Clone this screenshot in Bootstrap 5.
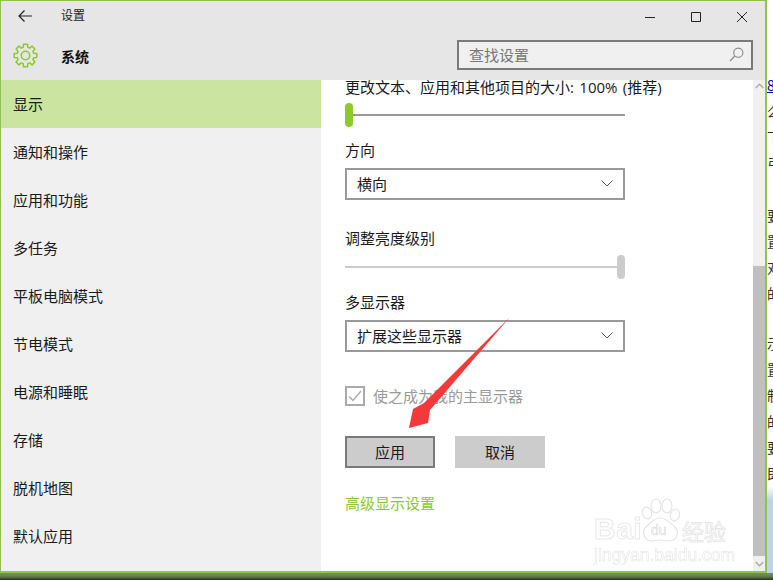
<!DOCTYPE html>
<html lang="zh">
<head>
<meta charset="utf-8">
<title>设置</title>
<link href="https://cdn.jsdelivr.net/npm/bootstrap@5.3.0/dist/css/bootstrap.min.css" rel="stylesheet">
<style>
html,body{width:773px;height:580px;overflow:hidden;margin:0;background:#fff;}
body{font-family:"Open Sans","Noto Sans CJK SC",sans-serif;font-size:15px;color:#1a1a1a;line-height:20px;position:relative;}
.stage{height:573px;}
.win{width:767px;height:573px;border:solid #8fc351;border-width:1px 2px 2px 1px;background:#fff;flex:none;}
.webstrip{width:6px;overflow:hidden;font-size:14px;line-height:26px;background:linear-gradient(#fff 0,#fff 486px,#eef3f8 490px,#bcd3ea 500px,#bcd3ea 100%);padding-top:72px;height:573px;font-family:"Noto Sans CJK SC",sans-serif;white-space:nowrap;color:#333;}
.webstrip div{height:26px;}
.webstrip .lnk{color:#00c;text-decoration:underline;}
.webstrip .gap{height:24px;}
.webstrip .gap-a{height:26px;}
.desk{height:7px;background:linear-gradient(#71905a 0,#66824f 45%,#3c4a30 85%,#1e2418 100%);}
.head{background:#e6e6e6;height:79px;flex:none;}
.toprow{height:29px;}
.backbtn{width:48px;padding-left:17px;}
.apptitle{font-size:12px;margin-left:12px;color:#222;}
.winbtn{width:46px;height:29px;}
.winbtn svg{position:relative;top:1px;}
.secrow{height:50px;padding-left:12px;padding-right:12px;}
.sectitle{font-size:14px;font-weight:700;margin-left:23px;color:#111;margin-top:3px;}
.searchbox{width:296px;height:30px;border:2px solid #7a7a7a;background:#f0f0f0;color:#777;padding:0 10px;margin-top:-1px;}
.main{height:491px;}
.sidenav{width:320px;flex:none;background:#f0f0f0;border-radius:0;}
.sidenav .list-group-item{height:48px;border:0;background:transparent;padding:0 12px;display:flex;align-items:center;color:#1a1a1a;font-size:15px;border-radius:0;}
.sidenav .list-group-item.active{background:#cbe5a0;color:#1a1a1a;margin:0;}
.pane{width:432px;flex:none;padding-left:24px;overflow:hidden;}
.lbl{height:20px;white-space:nowrap;}
.lbl-first{margin-top:-3px;word-spacing:1.5px;}
.sliderwrap{width:280px;height:24px;margin-top:6px;}
.sliderwrap-b{margin-top:7px;}
.track{height:2px;background:#999;}
.track-off{background:#ccc;}
.knob{width:8px;height:24px;border-radius:4px;background:#8dc92c;position:absolute;top:0;}
.knob-l{left:0;}
.knob-r{right:0;background:#ccc;}
.gap13{margin-top:13px;}
.gap28{margin-top:28px;}
.dropbox{width:280px;height:32px;border:2px solid #999;border-radius:0;padding:0 10px 1px;margin-top:8px;background:#fff;color:#1a1a1a;font-size:15px;}
.checkrow{margin-top:34px;height:20px;color:#999;}
.checkmark{width:20px;height:20px;border:2px solid #aaa;margin-right:8px;flex:none;}
.btnrow{margin-top:30px;gap:20px;}
.actbtn{width:90px;height:32px;background:#ccc;border:2px solid #ccc;border-radius:0;color:#1a1a1a;font-size:15px;padding:0;line-height:26px;}
.actbtn-def{border-color:#7a7a7a;}
.advlink{display:block;margin-top:25px;color:#8dc92c;text-decoration:none;}
.sbar{width:12px;flex:none;background:#f0f0f0;}
.sbar-top,.sbar-bot{height:12px;flex:none;}
.sbar-space{height:174px;flex:none;}
.sbar-thumb{flex:1;background:#c0c0c0;}
.sbar-bot{height:15px;}
.arrow{position:absolute;left:400px;top:310px;width:120px;height:125px;}
.wm{position:absolute;left:590px;top:498px;width:145px;height:68px;color:#fff;filter:blur(.4px);}
.wm-big{position:absolute;font-family:"Liberation Sans",sans-serif;font-size:30px;font-weight:700;line-height:26px;-webkit-text-stroke:1px #e8e8e8;}
.wm-bai{left:4px;top:18px;letter-spacing:.5px;}
.wm-cn{left:92px;top:21px;font-family:"Noto Sans CJK SC",sans-serif;font-size:22px;font-weight:400;line-height:22px;}
.wm-url{position:absolute;left:4px;top:48px;font-family:"Liberation Sans",sans-serif;font-size:17.5px;line-height:18px;white-space:nowrap;-webkit-text-stroke:.6px #e6e6e6;}
.wm-paw{position:absolute;left:44px;top:0;}
</style>
</head>
<body>
<div class="stage d-flex">
  <div class="win d-flex flex-column">
    <div class="head d-flex flex-column">
      <div class="toprow d-flex align-items-center">
        <div class="backbtn d-flex align-items-center">
          <svg width="14" height="12" viewBox="0 0 14 12" fill="none" stroke="#222" stroke-width="1.2"><path d="M14 6H1M6.5 .5 1 6l5.5 5.5"/></svg>
        </div>
        <span class="apptitle">设置</span>
        <div class="d-flex ms-auto">
          <div class="winbtn d-flex align-items-center justify-content-center"><svg width="12" height="12" viewBox="0 0 12 12" stroke="#222" stroke-width="1"><path d="M1 6.5h10"/></svg></div>
          <div class="winbtn d-flex align-items-center justify-content-center"><svg width="12" height="12" viewBox="0 0 12 12" fill="none" stroke="#222" stroke-width="1"><path d="M1.5 1.5h9v9h-9z"/></svg></div>
          <div class="winbtn d-flex align-items-center justify-content-center"><svg width="12" height="12" viewBox="0 0 12 12" fill="none" stroke="#222" stroke-width="1"><path d="M1 1l10 10M11 1 1 11"/></svg></div>
        </div>
      </div>
      <div class="secrow d-flex align-items-center">
        <svg width="25" height="25" viewBox="-12.5 -12.5 25 25" fill="none" stroke="#8dc92c" stroke-width="1.5" style="flex:none"><path stroke-linejoin="round" d="M-2.34-8.17-2-11.3H2L2.34-8.17 4.12-7.43 6.58-9.4 9.4-6.58 7.43-4.12 8.17-2.34 11.3-2V2L8.17 2.34 7.43 4.12 9.4 6.58 6.58 9.4 4.12 7.43 2.34 8.17 2 11.3H-2L-2.34 8.17-4.12 7.43-6.58 9.4-9.4 6.58-7.43 4.12-8.17 2.34-11.3 2V-2L-8.17-2.34-7.43-4.12-9.4-6.58-6.58-9.4-4.12-7.43Z"/><circle r="4.2"/></svg>
        <span class="sectitle">系统</span>
        <div class="searchbox d-flex align-items-center justify-content-between ms-auto">
          <span>查找设置</span>
          <svg width="15" height="15" viewBox="0 0 15 15" fill="none" stroke="#888" stroke-width="1.1" style="margin-right:-3px"><circle cx="9.3" cy="5.7" r="4.6"/><path d="M5.8 9 1 14"/></svg>
        </div>
      </div>
    </div>
    <div class="main d-flex">
      <div class="sidenav list-group list-group-flush">
        <a class="list-group-item active">显示</a>
        <a class="list-group-item">通知和操作</a>
        <a class="list-group-item">应用和功能</a>
        <a class="list-group-item">多任务</a>
        <a class="list-group-item">平板电脑模式</a>
        <a class="list-group-item">节电模式</a>
        <a class="list-group-item">电源和睡眠</a>
        <a class="list-group-item">存储</a>
        <a class="list-group-item">脱机地图</a>
        <a class="list-group-item">默认应用</a>
      </div>
      <div class="pane">
        <div class="lbl lbl-first">更改文本、应用和其他项目的大小: 100% (推荐)</div>
        <div class="sliderwrap position-relative d-flex align-items-center"><div class="track w-100"></div><div class="knob knob-l"></div></div>
        <div class="lbl gap13">方向</div>
        <div class="dropbox d-flex align-items-center justify-content-between"><span>横向</span><svg width="12" height="7" viewBox="0 0 12 7" fill="none" stroke="#555" stroke-width="1"><path d="M.5 .5 6 6l5.5-5.5"/></svg></div>
        <div class="lbl gap28">调整亮度级别</div>
        <div class="sliderwrap sliderwrap-b position-relative d-flex align-items-center"><div class="track track-off w-100"></div><div class="knob knob-r"></div></div>
        <div class="lbl gap13">多显示器</div>
        <div class="dropbox d-flex align-items-center justify-content-between"><span>扩展这些显示器</span><svg width="12" height="7" viewBox="0 0 12 7" fill="none" stroke="#555" stroke-width="1"><path d="M.5 .5 6 6l5.5-5.5"/></svg></div>
        <div class="checkrow d-flex align-items-center">
          <div class="checkmark d-flex align-items-center justify-content-center"><svg width="14" height="12" viewBox="0 0 14 12" fill="none" stroke="#aaa" stroke-width="1.4"><path d="M1 6.5 5 10.5 13 1"/></svg></div>
          <span>使之成为我的主显示器</span>
        </div>
        <div class="btnrow d-flex">
          <button type="button" class="btn actbtn actbtn-def">应用</button>
          <button type="button" class="btn actbtn">取消</button>
        </div>
        <a class="advlink" href="#">高级显示设置</a>
      </div>
      <div class="sbar d-flex flex-column">
        <div class="sbar-top d-flex justify-content-center align-items-center"><svg width="9" height="6" viewBox="0 0 9 6" fill="none" stroke="#aaa" stroke-width="1.4"><path d="M.7 5 4.5 1.3 8.3 5"/></svg></div>
        <div class="sbar-space"></div>
        <div class="sbar-thumb"></div>
        <div class="sbar-bot d-flex justify-content-center align-items-center"><svg width="9" height="6" viewBox="0 0 9 6" fill="none" stroke="#aaa" stroke-width="1.4"><path d="M.7 1 4.5 4.7 8.3 1"/></svg></div>
      </div>
    </div>
  </div>
  <div class="webstrip">
    <div class="lnk">8</div><div>么</div><div>下</div><div>弓</div>
    <div class="gap-a"></div>
    <div>要</div><div>置</div><div>对</div><div>的</div>
    <div class="gap"></div>
    <div>示</div><div>置</div><div>制</div><div>的</div><div>要</div><div>即</div>
  </div>
</div>
<div class="desk"></div>

<svg class="arrow" viewBox="400 310 120 125"><polygon fill="#f5393b" points="510,317 424,403 413,409 409,428 428,423 430,410"/></svg>

<div class="wm">
  <span class="wm-big wm-bai">Bai</span>
  <svg class="wm-paw" width="50" height="46" viewBox="0 0 50 46" fill="#fff" stroke="#e4e4e4" stroke-width="1.2"><ellipse cx="13" cy="15" rx="4.5" ry="6" transform="rotate(-20 13 15)"/><ellipse cx="22" cy="8" rx="5" ry="7"/><ellipse cx="33" cy="8" rx="5" ry="7"/><ellipse cx="41" cy="17" rx="4.5" ry="6" transform="rotate(20 41 17)"/><path d="M26 20c-7 0-9 5-14 9-5 5-2 14 6 14 3 0 5-1 8-1s6 1 9 1c8 0 11-9 6-14-5-4-8-9-15-9Z"/><text x="17" y="37" font-family="Liberation Sans" font-size="14" fill="#fff" stroke="#ddd" stroke-width=".7">du</text></svg>
  <span class="wm-big wm-cn">经验</span>
  <span class="wm-url">jingyan.baidu.com</span>
</div>
<script src="https://cdn.jsdelivr.net/npm/bootstrap@5.3.0/dist/js/bootstrap.bundle.min.js"></script>
</body>
</html>
